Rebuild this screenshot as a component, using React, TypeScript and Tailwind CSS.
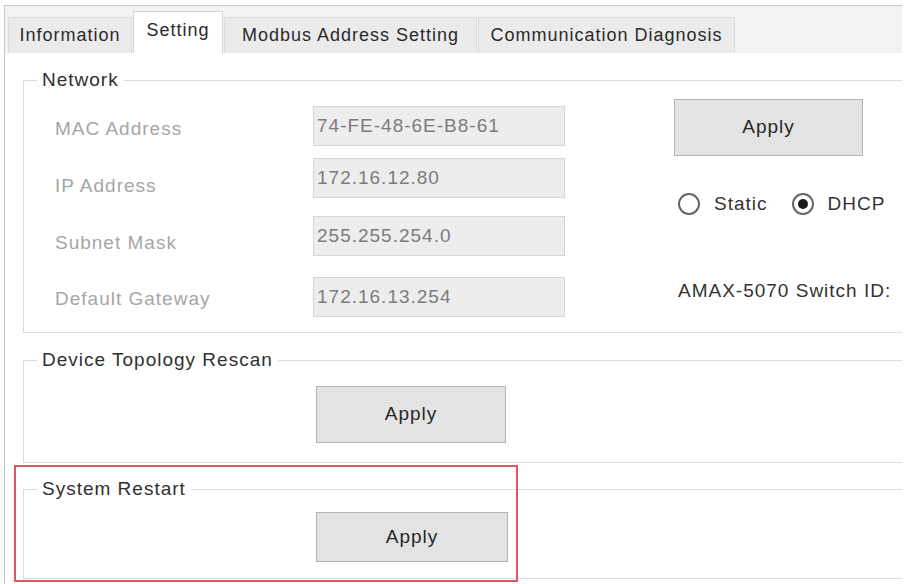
import { ReactNode } from "react"

const tabs = [
    { label: "Information", cls: "w-[124px] h-[36px] bg-[#ebebeb] border border-b-0 border-[#dcdcdc] ml-[3px]" },
    { label: "Setting", cls: "w-[90px] h-[42px] bg-white border border-b-0 border-[#d4d4d4] ml-[1px] pb-[4px]" },
    { label: "Modbus Address Setting", cls: "w-[253px] h-[36px] bg-[#ebebeb] border border-b-0 border-[#dcdcdc] ml-[1px]" },
    { label: "Communication Diagnosis", cls: "w-[257px] h-[36px] bg-[#ebebeb] border border-b-0 border-[#dcdcdc] ml-[1px]" },
]

const rows = [
    { label: "MAC Address", value: "74-FE-48-6E-B8-61", row: "mt-[15px]", lbl: "pt-[6px]" },
    { label: "IP Address", value: "172.16.12.80", row: "mt-[12px]", lbl: "pt-[16px]" },
    { label: "Subnet Mask", value: "255.255.254.0", row: "mt-[18px]", lbl: "pt-[14px]" },
    { label: "Default Gateway", value: "172.16.13.254", row: "mt-[21px]", lbl: "pt-[4px]" },
]

const Group = ({ title, className, children }: { title: string; className: string; children: ReactNode }) => (
    <fieldset className={`ml-[18px] w-[890px] border border-[#dcdcdc] ${className}`}>
        <legend className="ml-[13px] px-[5px] leading-[22px] text-[#303030]">{title}</legend>
        {children}
    </fieldset>
)

const ApplyButton = ({ className }: { className: string }) => (
    <button className={`flex items-center justify-center bg-[#e3e3e3] border border-[#b4b4b4] text-[#262626] ${className}`}>
        Apply
    </button>
)

const Radio = ({ label, checked }: { label: string; checked?: boolean }) => (
    <div className="flex items-center gap-[14px]">
        <span className="flex h-[22px] w-[22px] items-center justify-center rounded-full border-2 border-[#666] bg-white">
            {checked && <span className="h-[10px] w-[10px] rounded-full bg-[#1a1a1a]" />}
        </span>
        <span className="text-[#333]">{label}</span>
    </div>
)

const App = () => {
    return (
        <div
            className="relative w-[909px] h-[584px] overflow-hidden bg-white text-[19px] tracking-[1px]"
            style={{ fontFamily: '"Liberation Sans", Arial, sans-serif' }}
        >
            <div className="ml-[4px] mt-[5px] w-[898px] h-[579px] overflow-hidden border-l border-t border-[#c6c6c6]">

                {/* tab strip */}
                <div className="flex items-end h-[47px] bg-[#f2f2f2]">
                    {tabs.map((t) => (
                        <div key={t.label} className={`flex items-center justify-center text-[18px] text-[#2a2a2a] ${t.cls}`}>
                            {t.label}
                        </div>
                    ))}
                </div>

                <div className="pt-[16px]">
                    <Group title="Network" className="pb-[15px]">
                        <div className="flex">
                            <div className="flex flex-col pl-[31px]">
                                {rows.map((r) => (
                                    <div key={r.label} className={`flex items-center h-[40px] ${r.row}`}>
                                        <span className={`w-[258px] text-[#a6a6a6] ${r.lbl}`}>{r.label}</span>
                                        <div className="flex items-center w-[252px] h-[40px] px-[3px] bg-[#ededed] border border-[#d6d6d6] text-[#7c7c7c]">
                                            {r.value}
                                        </div>
                                    </div>
                                ))}
                            </div>
                            <div className="flex flex-col ml-[109px]">
                                <ApplyButton className="mt-[8px] w-[189px] h-[57px]" />
                                <div className="flex items-center gap-[24px] mt-[36px] ml-[4px] h-[24px]">
                                    <Radio label="Static" />
                                    <Radio label="DHCP" checked />
                                </div>
                                <span className="mt-[64px] ml-[4px] leading-[22px] text-[#333]">AMAX-5070 Switch ID:</span>
                            </div>
                        </div>
                    </Group>

                    <Group title="Device Topology Rescan" className="mt-[16px] pb-[19px]">
                        <ApplyButton className="mt-[15px] ml-[292px] w-[190px] h-[57px]" />
                    </Group>

                    <Group title="System Restart" className="mt-[15px] pb-[16px]">
                        <ApplyButton className="mt-[12px] ml-[292px] w-[192px] h-[50px]" />
                    </Group>
                </div>
            </div>

            {/* highlight box drawn over the screenshot */}
            <div className="absolute left-[14px] top-[465px] w-[504px] h-[117px] border-2 border-[#dc5864]" />
        </div>
    )
}

export default App
